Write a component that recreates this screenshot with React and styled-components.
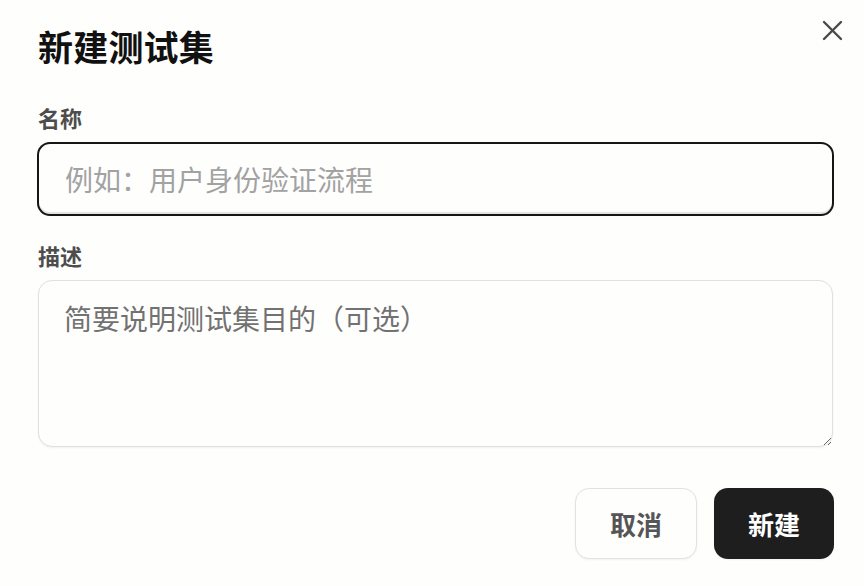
import React from "react";
import styled, { createGlobalStyle } from "styled-components";

const GlobalStyle = createGlobalStyle`
  html, body {
    margin: 0;
    padding: 0;
    background: #fefefd;
  }
  body {
    font-family: "Noto Sans CJK SC", "Noto Sans", sans-serif;
    color: #111;
  }
`;

const Dialog = styled.div`
  width: 864px;
  height: 586px;
  box-sizing: border-box;
  padding: 24px 30px 0 38px;
  background: #fefefd;
`;

const Header = styled.div`
  display: flex;
  align-items: flex-start;
  justify-content: space-between;
`;

const Title = styled.h2`
  margin: 0;
  font-size: 35px;
  line-height: 44px;
  font-weight: 700;
  color: #111;
  letter-spacing: 0.2px;
`;

const CloseButton = styled.button`
  margin: -6px -10px 0 0;
  width: 24px;
  height: 24px;
  padding: 0;
  border: none;
  background: none;
  display: flex;
  align-items: center;
  justify-content: center;
  color: #4a4a4a;
  cursor: pointer;
`;

const Field = styled.div`
  display: flex;
  flex-direction: column;
  margin-top: ${(p) => p.$top}px;
`;

const Label = styled.label`
  font-size: 22px;
  line-height: 30px;
  font-weight: 600;
  color: #4d4d4d;
  margin-bottom: 10px;
`;

const Input = styled.input`
  height: 74px;
  box-sizing: border-box;
  margin-left: -1px;
  border: 2px solid #161616;
  border-radius: 13px;
  background: #fefefd;
  box-shadow: inset 0 -2px 0 #e4e4e4;
  padding: 0 26px;
  font-family: inherit;
  font-size: 28px;
  color: #111;
  outline: none;
  caret-color: #111;

  &::placeholder {
    color: #a2a2a2;
  }
`;

const TextArea = styled.textarea`
  height: 167px;
  box-sizing: border-box;
  margin-right: 1px;
  border: 1.5px solid #e0e0de;
  border-radius: 14px;
  background: #fefefd;
  box-shadow: 0 1px 2px rgba(0, 0, 0, 0.05);
  padding: 16px 25px;
  font-family: inherit;
  font-size: 28px;
  line-height: 42px;
  color: #111;
  outline: none;
  resize: vertical;

  &::placeholder {
    color: #727272;
  }
`;

const Footer = styled.div`
  display: flex;
  justify-content: flex-end;
  gap: 17px;
  margin-top: 41px;
`;

const Button = styled.button`
  height: 71px;
  width: ${(p) => (p.$primary ? 120 : 122)}px;
  box-sizing: border-box;
  border-radius: 14px;
  border: ${(p) => (p.$primary ? "none" : "1.5px solid #e2e2e0")};
  background: ${(p) => (p.$primary ? "#1e1e1e" : "#fefefd")};
  color: ${(p) => (p.$primary ? "#ffffff" : "#555555")};
  box-shadow: 0 1px 2px rgba(0, 0, 0, 0.05);
  font-family: inherit;
  font-size: 26px;
  font-weight: 700;
  cursor: pointer;
`;

export default function App() {
  return (
    <>
      <GlobalStyle />
      <Dialog>
        <Header>
          <Title>新建测试集</Title>
          <CloseButton aria-label="关闭">
            <svg width="21" height="21" viewBox="0 0 21 21" fill="none">
              <path
                d="M2 2L19 19M19 2L2 19"
                stroke="currentColor"
                strokeWidth="2.4"
                strokeLinecap="round"
              />
            </svg>
          </CloseButton>
        </Header>
        <Field $top={34}>
          <Label>名称</Label>
          <Input autoFocus placeholder="例如：用户身份验证流程" />
        </Field>
        <Field $top={24}>
          <Label>描述</Label>
          <TextArea placeholder="简要说明测试集目的（可选）" />
        </Field>
        <Footer>
          <Button>取消</Button>
          <Button $primary>新建</Button>
        </Footer>
      </Dialog>
    </>
  );
}
